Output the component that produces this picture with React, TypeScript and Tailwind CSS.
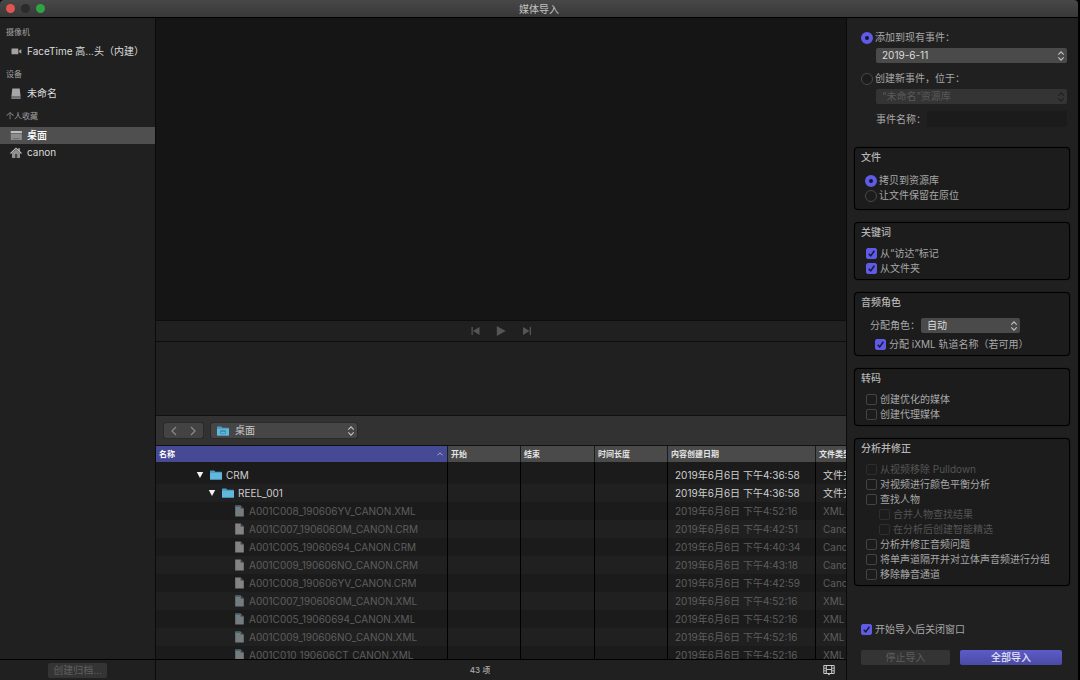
import { useState } from 'react'
import type { ReactNode } from 'react'

type Row = {
  name: string
  date: string
  kind: string
  type: 'folder' | 'xml' | 'crm'
  depth: 0 | 1 | 2
}

const rows: Row[] = [
  { name: 'CRM', date: '2019年6月6日 下午4:36:58', kind: '文件夹', type: 'folder', depth: 0 },
  { name: 'REEL_001', date: '2019年6月6日 下午4:36:58', kind: '文件夹', type: 'folder', depth: 1 },
  { name: 'A001C008_190606YV_CANON.XML', date: '2019年6月6日 下午4:52:16', kind: 'XML', type: 'xml', depth: 2 },
  { name: 'A001C007_190606OM_CANON.CRM', date: '2019年6月6日 下午4:42:51', kind: 'Canon', type: 'crm', depth: 2 },
  { name: 'A001C005_19060694_CANON.CRM', date: '2019年6月6日 下午4:40:34', kind: 'Canon', type: 'crm', depth: 2 },
  { name: 'A001C009_190606NO_CANON.CRM', date: '2019年6月6日 下午4:43:18', kind: 'Canon', type: 'crm', depth: 2 },
  { name: 'A001C008_190606YV_CANON.CRM', date: '2019年6月6日 下午4:42:59', kind: 'Canon', type: 'crm', depth: 2 },
  { name: 'A001C007_190606OM_CANON.XML', date: '2019年6月6日 下午4:52:16', kind: 'XML', type: 'xml', depth: 2 },
  { name: 'A001C005_19060694_CANON.XML', date: '2019年6月6日 下午4:52:16', kind: 'XML', type: 'xml', depth: 2 },
  { name: 'A001C009_190606NO_CANON.XML', date: '2019年6月6日 下午4:52:16', kind: 'XML', type: 'xml', depth: 2 },
  { name: 'A001C010_190606CT_CANON.XML', date: '2019年6月6日 下午4:52:16', kind: 'XML', type: 'xml', depth: 2 },
]

const indent = ['pl-[40px]', 'pl-[52px]', 'pl-[79px]']

function FolderIcon({ desktop }: { desktop?: boolean }) {
  return (
    <svg viewBox="0 0 12 10" className="h-[10px] w-3 shrink-0">
      <path d="M0 1.2Q0 .5.7.5h3.6l1 1.2h6Q12 1.7 12 2.4V9q0 .6-.6.6H.6Q0 9.600 0 9z" fill="#4a9fc4" />
      <path d="M0 3h12v6q0 .6-.6.6H.6Q0 9.600 0 9z" fill="#62b8dc" />
      {desktop && <path d="M3.500 4.500h5v3.300h-5zM3.500 5.500h5" fill="none" stroke="#3f86a6" strokeWidth=".8" />}
    </svg>
  )
}

function FileIcon({ xml }: { xml: boolean }) {
  return (
    <svg viewBox="0 0 9 12" className="h-3 w-[9px] shrink-0">
      <path d="M.2.5h5.500L8.800 3.600v8H.2z" fill={xml ? '#747c80' : '#848484'} />
      <path d="M5.700.5l3.100 3.100H5.700z" fill="#3c3c3c" />
      {xml && <path d="M.2.5h4.800v1.400H.2z" fill="#3f6274" />}
    </svg>
  )
}

function CameraIcon() {
  return (
    <svg viewBox="0 0 12 12" className="h-3 w-3 shrink-0" fill="#a3a3a3">
      <rect x="1.500" y="2.500" width="6.800" height="5.800" rx=".6" />
      <path d="M8.800 5l2.500-1.900v4.600L8.800 5.900z" />
    </svg>
  )
}

function DriveIcon() {
  return (
    <svg viewBox="0 0 12 12" className="h-3 w-3 shrink-0">
      <path d="M2.300.5h7.400l.9 8H1.400z" fill="#a6a6a6" />
      <path d="M1.400 8.500h9.200V11H1.400z" fill="#858585" />
      <path d="M1.800 9.700h8.400" stroke="#555" strokeWidth=".6" />
    </svg>
  )
}

function DesktopIcon() {
  return (
    <svg viewBox="0 0 12 12" className="h-3 w-3 shrink-0">
      <rect x=".8" y="1" width="11" height="9" fill="#8c8c8c" />
      <rect x=".8" y="1" width="11" height="2" fill="#bdbdbd" />
      <path d="M.8 3.500h11" stroke="#5a5a5a" strokeWidth=".7" />
      <path d="M2.800 8.700h6.500" stroke="#5f5f5f" strokeWidth=".8" />
    </svg>
  )
}

function HomeIcon() {
  return (
    <svg viewBox="0 0 12 12" className="h-3 w-3 shrink-0">
      <path d="M2 6l4-3.800L10 6v5H2z" fill="#8f8f8f" />
      <path d="M8.300 1.300h1.500v3L8.300 3z" fill="#b5b5b5" />
      <path d="M.5 6.500L6 1.200l5.500 5.300" fill="none" stroke="#c4c4c4" strokeWidth="1.100" />
      <path d="M5 7h2.200v4H5z" fill="#484848" />
    </svg>
  )
}

function FilmIcon() {
  return (
    <svg viewBox="0 0 12 12" className="h-3 w-3" fill="none" stroke="#c8c8c8">
      <path d="M.8 1.500h10.400v8H.8zM3.300 1.500v8M8.700 1.500v8M3.300 5.500h5.400" />
      <path d="M.8 4.200h2.500M.8 6.800h2.500M8.700 4.200h2.500M8.700 6.800h2.500" strokeWidth=".8" />
      <path d="M4.600 9.800h2.800L6 11.400z" fill="#c8c8c8" stroke="none" />
    </svg>
  )
}

function UpDown({ dim }: { dim?: boolean }) {
  return (
    <svg
      viewBox="0 0 8 12"
      className="pointer-events-none absolute right-0.5 top-1/2 h-3 w-2 -translate-y-1/2"
      fill="none"
      stroke={dim ? '#1f1f1f' : '#c4c4c4'}
      strokeWidth="1.100"
    >
      <path d="M1.300 4.600L4 1.900l2.700 2.700M1.300 7.400L4 10.100l2.700-2.700" />
    </svg>
  )
}

function Radio({ name, checked, onChange, children }: {
  name: string
  checked: boolean
  onChange: () => void
  children: ReactNode
}) {
  return (
    <label className="flex h-[15px] items-center gap-0.5">
      <input
        type="radio"
        name={name}
        checked={checked}
        onChange={onChange}
        className="h-3 w-3 shrink-0 appearance-none rounded-full border border-[#484848] bg-[#1c1c1c] checked:border-4 checked:border-[#5f5be6] checked:bg-[#15152e]"
      />
      {children}
    </label>
  )
}

function Check({ on, disabled, children }: { on?: boolean; disabled?: boolean; children: ReactNode }) {
  return (
    <label className={`flex h-[15px] items-center gap-[3px] ${disabled ? 'text-[#545454]' : ''}`}>
      <span className="relative flex h-[11px] w-[11px] shrink-0">
        <input
          type="checkbox"
          defaultChecked={on}
          disabled={disabled}
          className="peer h-[11px] w-[11px] appearance-none rounded-[2px] border border-[#444] checked:border-[#5f5be6] checked:bg-[#5f5be6] disabled:border-[#2e2e2e]"
        />
        <svg
          viewBox="0 0 11 11"
          className="pointer-events-none absolute inset-0 hidden peer-checked:block"
          fill="none"
          stroke="#18183a"
          strokeWidth="1.500"
        >
          <path d="M2.700 5.700l2 2.200 3.700-5.200" />
        </svg>
      </span>
      {children}
    </label>
  )
}

function Group({ title, children }: { title: string; children: ReactNode }) {
  return (
    <section className="rounded-[4px] border border-black bg-[#1c1c1c] px-1.5 pb-[3px] pt-px shadow-[0_0_1px_#000]">
      <h2 className="h-4 text-[10px] font-medium leading-4 text-[#b4b4b4]">{title}</h2>
      {children}
    </section>
  )
}

function SideItem({ icon, selected, children }: { icon: ReactNode; selected?: boolean; children: ReactNode }) {
  return (
    <button
      className={`flex h-[17px] w-full items-center gap-1 pl-[10px] text-[10px] ${
        selected ? 'bg-[#4f4f4f] font-medium text-white' : 'text-[#dcdcdc]'
      }`}
    >
      {icon}
      <span className="pl-px">{children}</span>
    </button>
  )
}

function SideSection({ title, children }: { title: string; children: ReactNode }) {
  return (
    <section>
      <h2 className="mb-0.5 h-[18px] pl-1.5 text-[8px] leading-[18px] text-[#a0a0a0]">{title}</h2>
      {children}
    </section>
  )
}

function Sidebar() {
  return (
    <aside className="flex w-[156px] shrink-0 flex-col border-r border-[#0a0a0a] bg-[#202020]">
      <nav className="flex flex-1 flex-col gap-[5px] pt-[5px]">
        <SideSection title="摄像机">
          <SideItem icon={<CameraIcon />}>FaceTime 高...头（内建）</SideItem>
        </SideSection>
        <SideSection title="设备">
          <SideItem icon={<DriveIcon />}>未命名</SideItem>
        </SideSection>
        <SideSection title="个人收藏">
          <SideItem icon={<DesktopIcon />} selected>桌面</SideItem>
          <SideItem icon={<HomeIcon />}>canon</SideItem>
        </SideSection>
      </nav>
      <footer className="flex h-[21px] items-center justify-center border-t border-black">
        <button disabled className="h-[15px] rounded-[2px] bg-[#343434] px-[5px] text-[10px] leading-[15px] text-[#606060]">
          创建归档...
        </button>
      </footer>
    </aside>
  )
}

function Browser() {
  const th = 'h-4 border-r border-[#1c1c1c] bg-[#4a4a4a] px-[3px] text-left text-[8px] font-bold'
  const td = 'h-[18px] overflow-hidden whitespace-nowrap border-r border-black p-0'

  return (
    <div className="h-[213px] overflow-hidden bg-[#1b1b1b]">
      <table className="w-full table-fixed border-separate border-spacing-0">
        <colgroup>
          <col className="w-[292px]" />
          <col className="w-[73px]" />
          <col className="w-[74px]" />
          <col className="w-[73px]" />
          <col className="w-[148px]" />
          <col />
        </colgroup>
        <thead className="text-[#e4e4e4]">
          <tr>
            <th className="h-4 border-r border-[#1c1c1c] bg-[#464a94] px-[3px] text-left text-[8px] font-bold text-white">
              <div className="flex items-center justify-between">
                名称
                <svg viewBox="0 0 8 6" className="h-1.5 w-2" fill="none" stroke="#aeb0dc">
                  <path d="M1.500 4.300L4 1.800l2.500 2.500" />
                </svg>
              </div>
            </th>
            <th className={th}>开始</th>
            <th className={th}>结束</th>
            <th className={th}>时间长度</th>
            <th className={th}>内容创建日期</th>
            <th className="h-4 overflow-hidden whitespace-nowrap bg-[#4a4a4a] pl-[3px] text-left text-[8px] font-bold">
              文件类型
            </th>
          </tr>
        </thead>
        <tbody className="text-[10px]">
          <tr aria-hidden="true">
            {[0, 1, 2, 3, 4].map((i) => (
              <td key={i} className="h-1 border-r border-black p-0" />
            ))}
            <td className="h-1 p-0" />
          </tr>
          {rows.map((r) => (
            <tr
              key={r.name}
              className={`even:bg-[#1b1b1b] odd:bg-[#202020] ${r.type === 'folder' ? 'text-[#cfcfcf]' : 'text-[#5e5e5e]'}`}
            >
              <td className={td}>
                <div className={`flex items-center ${indent[r.depth]}`}>
                  {r.type === 'folder' ? (
                    <>
                      <button aria-label={r.name} className="mr-1.5 flex h-2 w-2 items-center">
                        <svg viewBox="0 0 8 8" className="h-2 w-2">
                          <path d="M.8 1h6.400L4 7z" fill="#f2f2f2" />
                        </svg>
                      </button>
                      <FolderIcon />
                      <span className="pl-1">{r.name}</span>
                    </>
                  ) : (
                    <>
                      <FileIcon xml={r.type === 'xml'} />
                      <span className="pl-[5px]">{r.name}</span>
                    </>
                  )}
                </div>
              </td>
              <td className={td} />
              <td className={td} />
              <td className={td} />
              <td className={`${td} pl-[7px]`}>{r.date}</td>
              <td className="h-[18px] overflow-hidden whitespace-nowrap p-0 pl-[7px]">{r.kind}</td>
            </tr>
          ))}
        </tbody>
      </table>
    </div>
  )
}

function Transport() {
  return (
    <div className="flex h-[22px] items-center justify-center gap-4 border-y border-[#0d0d0d] bg-[#202020] text-[#555]">
      <button aria-label="上一个">
        <svg viewBox="0 0 10 10" className="h-[10px] w-[10px]" fill="currentColor">
          <path d="M1.500 1h1.300v8H1.500zM9.500 1v8L3 5z" />
        </svg>
      </button>
      <button aria-label="播放">
        <svg viewBox="0 0 10 10" className="h-[10px] w-[10px]" fill="currentColor">
          <path d="M.8 0l8.900 5-8.900 5z" />
        </svg>
      </button>
      <button aria-label="下一个">
        <svg viewBox="0 0 10 10" className="h-[10px] w-[10px]" fill="currentColor">
          <path d="M7.700 1H9v8H7.700zM1 1v8l6.500-4z" />
        </svg>
      </button>
    </div>
  )
}

function Settings() {
  const [target, setTarget] = useState('existing')
  const [storage, setStorage] = useState('copy')

  return (
    <aside className="flex w-[232px] shrink-0 flex-col border-l border-[#0a0a0a] bg-[#202020] pb-[15px] pl-[7px] pr-2 text-[10px] text-[#a8a8a8]">
      <div className="flex flex-col gap-[3px] pl-[7px] pr-[3px] pt-3">
        <Radio name="target" checked={target === 'existing'} onChange={() => setTarget('existing')}>
          添加到现有事件：
        </Radio>
        <div className="relative ml-[15px]">
          <select
            aria-label="现有事件"
            className="block h-[15px] w-full appearance-none rounded-[2px] bg-[#4a4a4a] px-1.5 text-[10px] leading-[15px] text-[#dcdcdc]"
          >
            <option>2019-6-11</option>
          </select>
          <UpDown />
        </div>
        <div className="pt-[5px]">
          <Radio name="target" checked={target === 'new'} onChange={() => setTarget('new')}>
            创建新事件，位于：
          </Radio>
        </div>
        <div className="relative ml-[15px]">
          <select
            aria-label="资源库"
            disabled
            className="block h-[15px] w-full appearance-none rounded-[2px] bg-[#343434] px-1.5 text-[10px] leading-[15px] text-[#5a5a5a] opacity-100"
          >
            <option>“未命名”资源库</option>
          </select>
          <UpDown dim />
        </div>
        <label className="ml-[15px] flex items-center gap-px pt-1">
          <span className="w-[50px] shrink-0 whitespace-nowrap">事件名称：</span>
          <input type="text" disabled className="h-4 min-w-0 flex-1 bg-[#1b1b1b]" />
        </label>
      </div>

      <div className="mt-5 flex flex-col gap-3">
        <Group title="文件">
          <div className="pb-[3px] pl-1 pt-2">
            <Radio name="storage" checked={storage === 'copy'} onChange={() => setStorage('copy')}>
              拷贝到资源库
            </Radio>
            <Radio name="storage" checked={storage === 'keep'} onChange={() => setStorage('keep')}>
              让文件保留在原位
            </Radio>
          </div>
        </Group>
        <Group title="关键词">
          <div className="pl-[5px] pt-1.5">
            <Check on>从“访达”标记</Check>
            <Check on>从文件夹</Check>
          </div>
        </Group>
        <Group title="音频角色">
          <div className="flex flex-col gap-1 pl-[9px] pt-2">
            <div className="flex items-center gap-px">
              <label htmlFor="role" className="w-[50px] whitespace-nowrap">分配角色：</label>
              <div className="relative w-[99px]">
                <select
                  id="role"
                  className="block h-[15px] w-full appearance-none rounded-[2px] bg-[#4a4a4a] px-1.5 text-[10px] leading-[15px] text-[#dcdcdc]"
                >
                  <option>自动</option>
                </select>
                <UpDown />
              </div>
            </div>
            <div className="pl-[5px]">
              <Check on>分配 iXML 轨道名称（若可用）</Check>
            </div>
          </div>
        </Group>
        <Group title="转码">
          <div className="pl-[5px] pt-1.5">
            <Check>创建优化的媒体</Check>
            <Check>创建代理媒体</Check>
          </div>
        </Group>
        <Group title="分析并修正">
          <div className="pl-[5px] pt-1.5">
            <Check disabled>从视频移除 Pulldown</Check>
            <Check>对视频进行颜色平衡分析</Check>
            <Check>查找人物</Check>
            <div className="pl-[13px]">
              <Check disabled>合并人物查找结果</Check>
              <Check disabled>在分析后创建智能精选</Check>
            </div>
            <Check>分析并修正音频问题</Check>
            <Check>将单声道隔开并对立体声音频进行分组</Check>
            <Check>移除静音通道</Check>
          </div>
        </Group>
      </div>

      <div className="mt-auto pl-[7px] pr-2 pt-4">
        <Check on>开始导入后关闭窗口</Check>
        <div className="mt-[13px] flex gap-[10px]">
          <button disabled className="h-[15px] w-[89px] rounded-[2px] bg-[#343434] text-[10px] leading-[15px] text-[#5e5e5e]">
            停止导入
          </button>
          <button className="h-[15px] flex-1 rounded-[2px] bg-linear-to-b from-[#5c5cc8] to-[#4a4aa6] text-[10px] font-medium leading-[15px] text-[#e6e6f4]">
            全部导入
          </button>
        </div>
      </div>
    </aside>
  )
}

export default function App() {
  return (
    <div className="flex h-screen flex-col overflow-hidden bg-black pr-0.5 font-['Inter','Noto_Sans_CJK_SC',sans-serif]" lang="zh-CN">
      <header className="relative flex h-[18px] shrink-0 items-center justify-center rounded-t-[4px] border-b border-black bg-linear-to-b from-[#484848] to-[#383838]">
        <div className="absolute left-1.5 top-1 flex gap-1.5">
          <button aria-label="关闭" className="h-[9px] w-[9px] rounded-full bg-[#e0564e]" />
          <button aria-label="最小化" className="h-[9px] w-[9px] rounded-full bg-[#2b2b2b]" />
          <button aria-label="缩放" className="h-[9px] w-[9px] rounded-full bg-[#2fa444]" />
        </div>
        <h1 className="text-[10px] leading-4 text-[#c4c4c4]">媒体导入</h1>
      </header>

      <div className="flex min-h-0 flex-1">
        <Sidebar />
        <main className="flex min-w-0 flex-1 flex-col bg-[#202020]">
          <div className="min-h-0 flex-1 bg-[#151515]" />
          <Transport />
          <div className="h-[73px] shrink-0" />
          <div className="flex h-[31px] shrink-0 items-center gap-2 border-y border-[#111] bg-[#323232] pl-2">
            <div className="flex rounded-[2px] bg-[#434343] text-[#8a8a8a] outline outline-[#2a2a2a]">
              <button aria-label="后退" className="flex h-[15px] w-[19px] items-center justify-center">
                <svg viewBox="0 0 8 10" className="h-[10px] w-2" fill="none" stroke="currentColor" strokeWidth="1.200">
                  <path d="M6 1L2 5l4 4" />
                </svg>
              </button>
              <button aria-label="前进" className="flex h-[15px] w-5 items-center justify-center">
                <svg viewBox="0 0 8 10" className="h-[10px] w-2" fill="none" stroke="currentColor" strokeWidth="1.200">
                  <path d="M2 1l4 4-4 4" />
                </svg>
              </button>
            </div>
            <div className="relative w-[146px]">
              <select
                aria-label="位置"
                className="block h-[15px] w-full appearance-none rounded-[2px] bg-[#464646] pl-6 text-[10px] leading-[15px] text-[#c8c8c8] outline outline-[#2a2a2a]"
              >
                <option>桌面</option>
              </select>
              <span className="pointer-events-none absolute inset-y-0 left-1.5 flex items-center">
                <FolderIcon desktop />
              </span>
              <UpDown />
            </div>
          </div>
          <Browser />
          <footer className="flex h-[21px] shrink-0 items-center border-t border-black">
            <p className="flex-1 text-center text-[8px] font-medium text-[#b0b0b0]">43 项</p>
            <button aria-label="片段显示" className="flex w-[42px] justify-center pl-2">
              <FilmIcon />
            </button>
          </footer>
        </main>
        <Settings />
      </div>
    </div>
  )
}
